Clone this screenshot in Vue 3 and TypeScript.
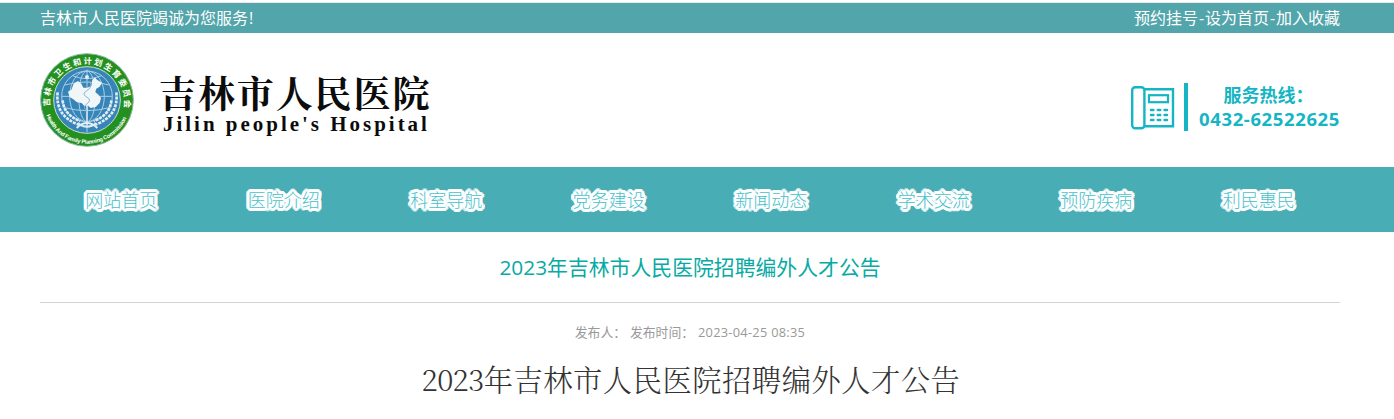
<template>
  <div class="page">
    <div class="top-bar">
      <div class="container top-inner">
        <span>吉林市人民医院竭诚为您服务<span class="mark">!</span></span>
        <span>预约挂号<span class="sep">-</span>设为首页<span class="sep">-</span>加入收藏</span>
      </div>
    </div>

    <header class="container header">
      <div class="logo">
        <svg class="emblem" viewBox="30 22 282 282">
          <defs>
            <path id="arc-top" d="M 60 182 A 112 112 0 1 1 282 182" />
            <path id="arc-bottom" d="M 49 209 A 130 130 0 0 0 293 209" />
          </defs>
          <circle cx="171" cy="163" r="139" fill="#249020" stroke="#8fb9a4" stroke-width="3" />
          <circle cx="171" cy="163" r="100" fill="#3784b9" stroke="#c5e0d5" stroke-width="3" />
          <g fill="none" stroke="#a9cfe6" stroke-width="3">
            <circle cx="171" cy="152" r="76" />
            <ellipse cx="171" cy="152" rx="52" ry="76" />
            <ellipse cx="171" cy="152" rx="25" ry="76" />
            <path d="M171 72V260M95 152H247M104 118Q171 100 238 118M104 186Q171 204 238 186M127 90Q171 108 215 90" />
          </g>
          <path
            class="map"
            d="M114 138L124 132L131 114L144 106L154 114L160 126L172 126L184 120L187 103L194 95L202 103L216 111L209 123L199 129L195 139L204 146L213 157L209 172L197 184L182 187L174 180L163 181L155 172L141 170L130 161L119 154Z"
          />
          <g fill="none" stroke="#e1edf4" stroke-width="8" stroke-dasharray="9 3">
            <path d="M83 140Q75 211 146 237" />
            <path d="M259 140Q267 211 196 237" />
            <path d="M98 164Q101 208 151 226" />
            <path d="M244 164Q241 208 191 226" />
          </g>
          <path d="M140 247Q171 217 202 247M143 232Q171 255 199 232" fill="none" stroke="#e4eff4" stroke-width="6" />
          <path d="M171 180V240" stroke="#e4eff4" stroke-width="4" />
          <path d="M159 111Q182 103 183 118Q182 130 169 136Q154 145 170 154Q187 163 170 175Q156 184 171 197" fill="none" stroke="#84b3cf" stroke-width="3" />
          <circle cx="171" cy="94" r="6" fill="#e4eff4" />
          <text class="ring-cn"><textPath href="#arc-top" textLength="386">吉林市卫生和计划生育委员会</textPath></text>
          <text class="ring-en"><textPath href="#arc-bottom" textLength="308">Health And Family Planning Commission</textPath></text>
        </svg>
        <div class="logo-text">
          <div class="logo-cn">吉林市人民医院</div>
          <div class="logo-en">Jilin people's Hospital</div>
        </div>
      </div>

      <div class="hotline">
        <svg class="phone" viewBox="0 0 44 44" fill="none" stroke="#15b5c3">
          <rect x="1.2" y="1.2" width="12.2" height="41" rx="3" stroke-width="2.4" />
          <path d="M13 3.2H42V40.2H13" stroke-width="2.4" />
          <rect x="18" y="9.2" width="19" height="7" stroke-width="2.2" />
          <path d="M20 24H22.4M26.8 24H29.2M33.6 24H36M20 29H22.4M26.8 29H29.2M33.6 29H36M20 34H22.4M26.8 34H29.2M33.6 34H36" stroke-width="2.5" stroke-linecap="round" />
        </svg>
        <div class="hotline-text">
          <div class="hotline-label">服务热线：</div>
          <div class="hotline-number">0432-62522625</div>
        </div>
      </div>
    </header>

    <nav class="nav">
      <ul class="container nav-list">
        <li v-for="item in navItems" :key="item"><a>{{ item }}</a></li>
      </ul>
    </nav>

    <main class="container">
      <h1 class="title">2023年吉林市人民医院招聘编外人才公告</h1>
      <div class="meta">
        <span>发布人：</span>
        <span>发布时间：</span>
        <span class="date">2023-04-25 08:35</span>
      </div>
      <h2 class="headline"><span class="year">2023</span>年吉林市人民医院招聘编外人才公告</h2>
    </main>
  </div>
</template>

<script setup lang="ts">
const navItems: string[] = [
  '网站首页',
  '医院介绍',
  '科室导航',
  '党务建设',
  '新闻动态',
  '学术交流',
  '预防疾病',
  '利民惠民',
];
</script>

<style>
body {
  margin: 0;
  background: #fff;
}
</style>

<style scoped>
.page {
  display: flow-root;
  height: 419px;
  overflow: hidden;
  font-family: "Open Sans", "Noto Sans CJK SC", sans-serif;
}

.container {
  width: 1300px;
  margin: 0 0 0 40px;
  padding: 0;
}

.top-bar {
  margin-top: 2px;
  height: 30px;
  border-top: 1px solid #e9e9e9;
  background: #52a5ab;
}

.top-inner {
  display: flex;
  justify-content: space-between;
  color: #fff;
  font-size: 16px;
  line-height: 30px;
}

.mark {
  margin-left: 1px;
}

.sep {
  margin: 0 0.9px;
}

.header {
  display: flex;
  justify-content: space-between;
  height: 134px;
}

.logo {
  display: flex;
}

.emblem {
  width: 94px;
  height: 94px;
  margin-top: 20px;
}

.map {
  fill: #f1f6f8;
}

.ring-cn,
.ring-en {
  fill: #fff;
  font-weight: 700;
}

.ring-cn {
  font-family: "Noto Sans CJK SC", sans-serif;
  font-size: 25px;
}

.ring-en {
  font-family: "Liberation Sans", sans-serif;
  font-size: 17px;
}

.logo-text {
  margin: 38px 0 0 25px;
  color: #0c0c0c;
  white-space: nowrap;
}

.logo-cn {
  font-family: "Noto Serif CJK SC", "Noto Sans CJK SC", serif;
  font-size: 37px;
  font-weight: 700;
  line-height: 42px;
  letter-spacing: 1.9px;
}

.logo-en {
  margin: 1px 0 0 4px;
  font-family: "Liberation Serif", serif;
  font-size: 21px;
  font-weight: 700;
  line-height: 20px;
  letter-spacing: 2.98px;
}

.hotline {
  display: flex;
  color: #15b5c3;
  margin-top: 50px;
}

.phone {
  width: 44px;
  height: 44px;
  margin-top: 3px;
}

.hotline-text {
  height: 48px;
  box-sizing: border-box;
  margin-left: 9px;
  padding-left: 11px;
  border-left: 4px solid #15b5c3;
  font-size: 18px;
  font-weight: 700;
  line-height: 24px;
  text-align: center;
}

.hotline-label {
  margin-right: 2px;
}

.hotline-number {
  font-size: 18.5px;
  letter-spacing: 0.62px;
}

.nav {
  height: 65px;
  background: #48adb5;
}

.nav-list {
  display: grid;
  grid-template-columns: repeat(8, 1fr);
  list-style: none;
  text-align: center;
  font-size: 18px;
  line-height: 64px;
}

.nav-list a {
  color: #48c1cb;
  font-family: "Noto Sans CJK SC", sans-serif;
  font-weight: 300;
  text-shadow:
    3px 0 #fff, -3px 0 #fff, 0 3px #fff, 0 -3px #fff,
    3px 1px #fff, 3px -1px #fff, -3px 1px #fff, -3px -1px #fff,
    1px 3px #fff, -1px 3px #fff, 1px -3px #fff, -1px -3px #fff,
    2px 2px #fff, -2px 2px #fff, 2px -2px #fff, -2px -2px #fff,
    2px 0 #fff, -2px 0 #fff, 0 2px #fff, 0 -2px #fff,
    1px 1px #fff, -1px 1px #fff, 1px -1px #fff, -1px -1px #fff,
    0 0 2px #fff, 0 0 2px #fff, 0 0 3px #fff;
}

.title {
  height: 70px;
  margin: 0;
  border-bottom: 1px solid #d3d3d3;
  color: #08aaa4;
  font-size: 20.85px;
  font-weight: 400;
  line-height: 71px;
  text-align: center;
}

.meta {
  display: flex;
  justify-content: center;
  gap: 4px;
  height: 58px;
  color: #999;
  font-size: 12.8px;
  line-height: 58px;
}

.date {
  letter-spacing: 0.28px;
}

.headline {
  margin: 0;
  padding-left: 2px;
  color: #333;
  font-family: "Noto Serif CJK SC", "Noto Sans CJK SC", serif;
  font-size: 29.3px;
  font-weight: 300;
  line-height: 35px;
  letter-spacing: 0.5px;
  text-align: center;
}

.year {
  letter-spacing: -0.6px;
}
</style>
